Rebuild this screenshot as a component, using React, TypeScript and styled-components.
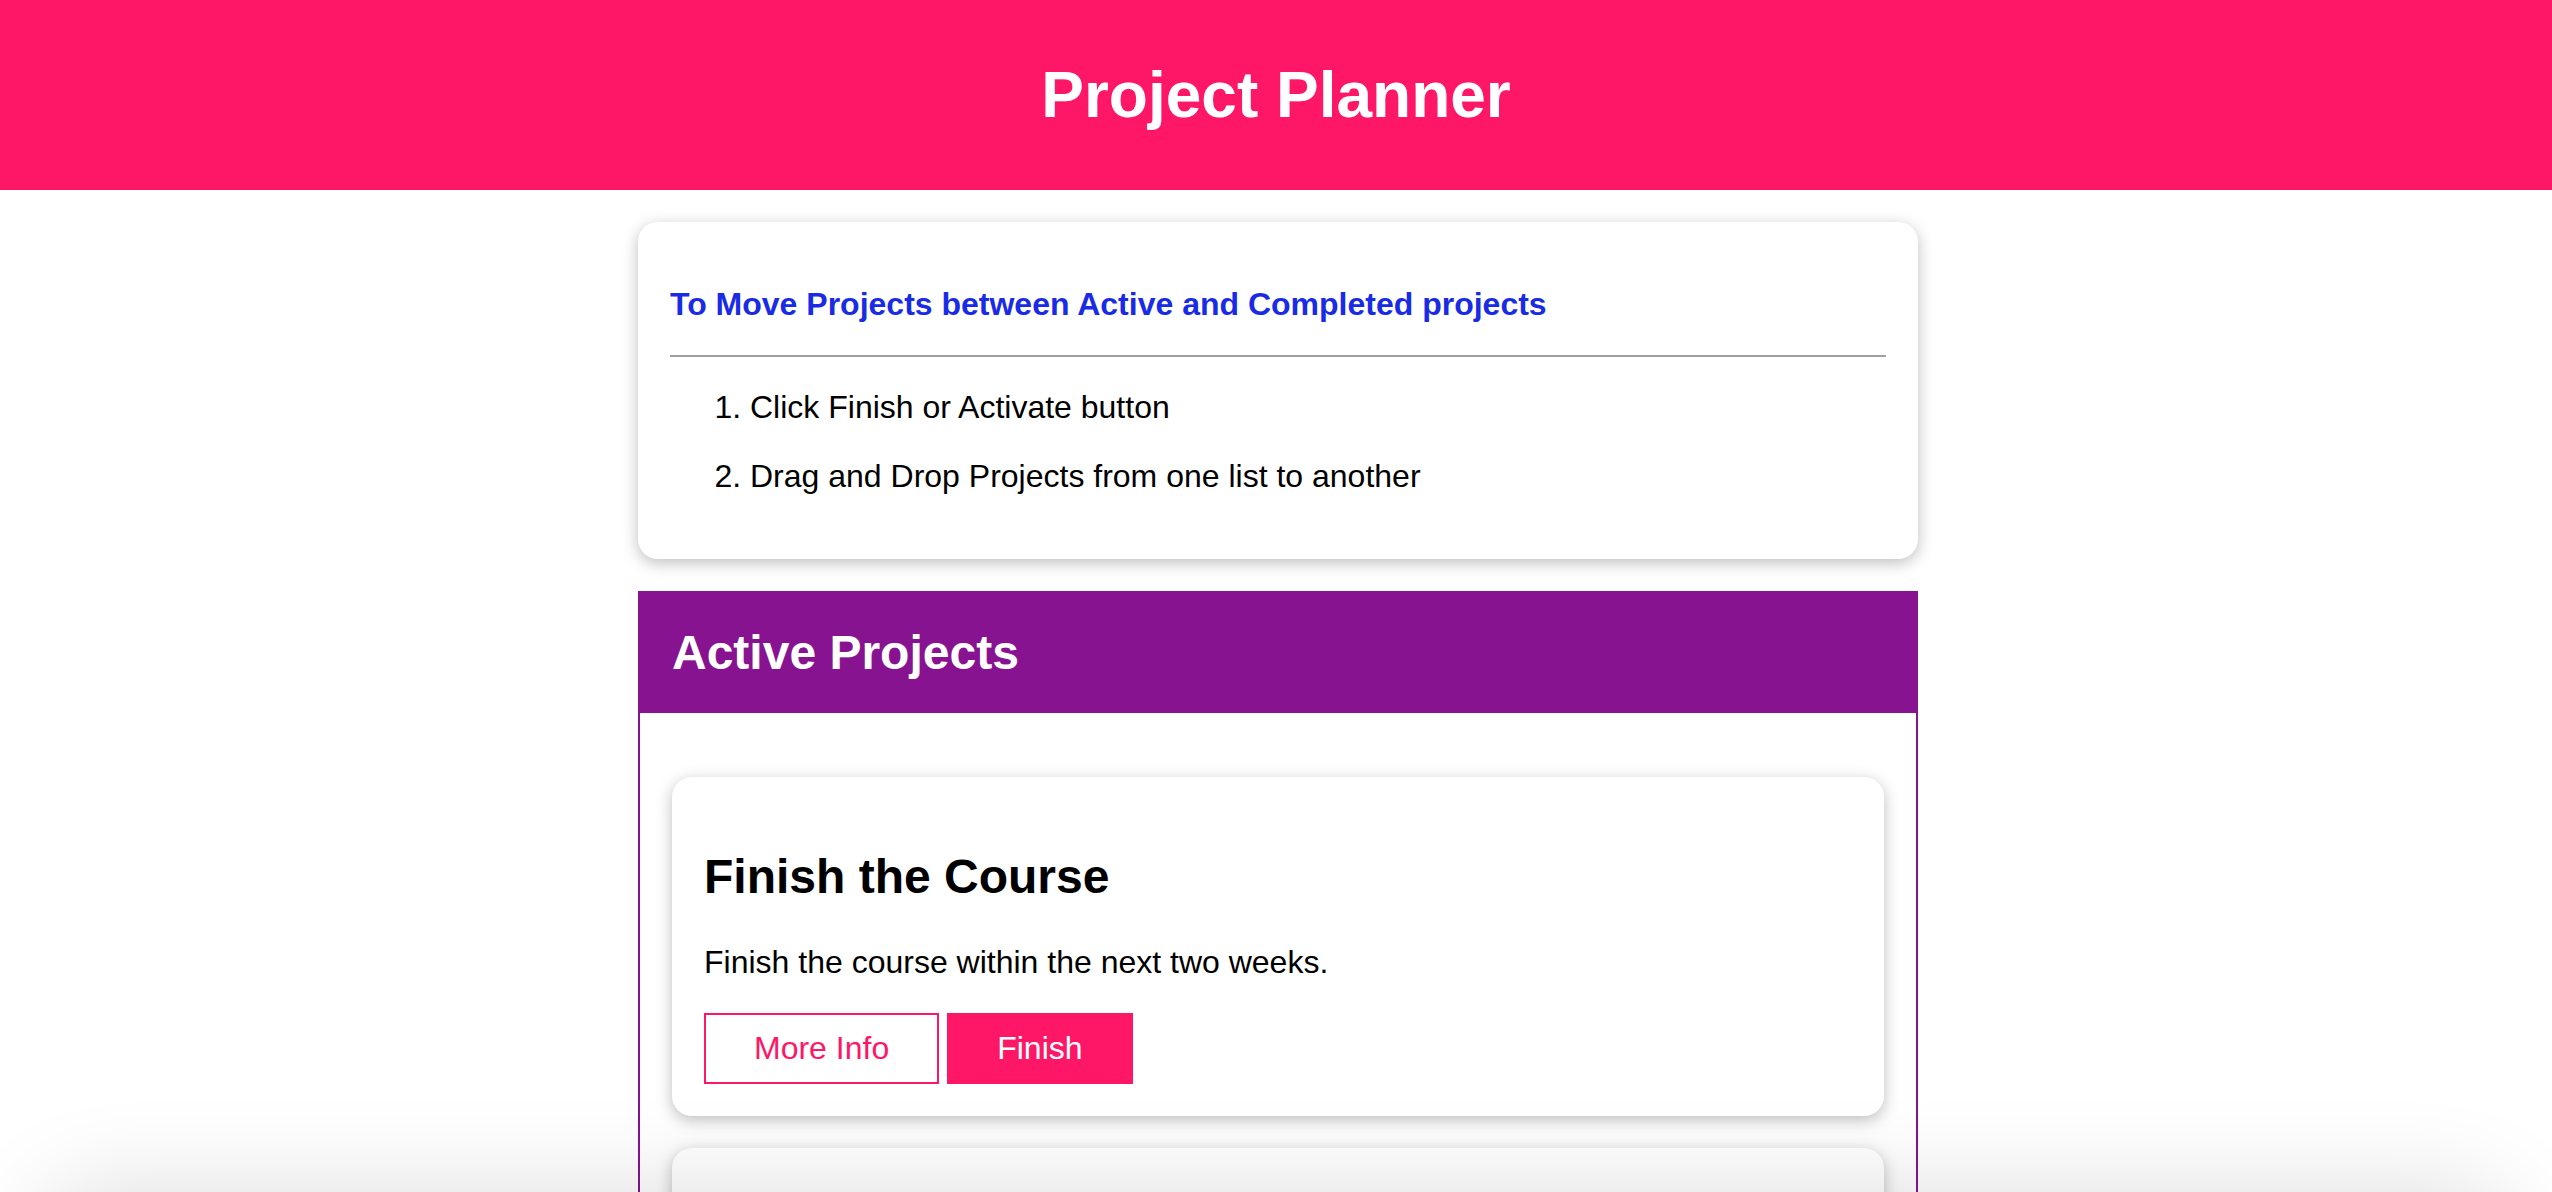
import styled, { createGlobalStyle } from "styled-components";

const colors = {
  pink: "#fd1766",
  purple: "#871391",
  blue: "#1a2be6",
  text: "#000000",
};

type Project = {
  id: string;
  title: string;
  description: string;
};

const activeProjects: Project[] = [
  {
    id: "p1",
    title: "Finish the Course",
    description: "Finish the course within the next two weeks.",
  },
  {
    id: "p2",
    title: "Build a Portfolio",
    description: "Put the finished projects online.",
  },
];

const steps = [
  "Click Finish or Activate button",
  "Drag and Drop Projects from one list to another",
];

export default function App() {
  return (
    <>
      <GlobalStyle />
      <TopBar>
        <Title>Project Planner</Title>
      </TopBar>
      <Main>
        <InfoCard>
          <InfoTitle>
            To Move Projects between Active and Completed projects
          </InfoTitle>
          <Divider />
          <Steps>
            {steps.map((step) => (
              <Step key={step}>{step}</Step>
            ))}
          </Steps>
        </InfoCard>

        <ProjectsSection aria-label="Active Projects">
          <SectionHeader>
            <SectionTitle>Active Projects</SectionTitle>
          </SectionHeader>
          <ProjectList>
            {activeProjects.map((project) => (
              <ProjectCard key={project.id}>
                <ProjectTitle>{project.title}</ProjectTitle>
                <ProjectText>{project.description}</ProjectText>
                <Actions>
                  <Button $variant="outline">More Info</Button>
                  <Button $variant="solid">Finish</Button>
                </Actions>
              </ProjectCard>
            ))}
          </ProjectList>
        </ProjectsSection>
      </Main>
      <WindowShade aria-hidden="true" />
    </>
  );
}

const GlobalStyle = createGlobalStyle`
  * {
    box-sizing: border-box;
  }

  body {
    margin: 0;
    background: #ffffff;
    color: ${colors.text};
    font-family: "Liberation Sans", Arial, Helvetica, sans-serif;
  }
`;

const TopBar = styled.header`
  display: flex;
  align-items: center;
  justify-content: center;
  height: 190px;
  background: ${colors.pink};
`;

const Title = styled.h1`
  margin: 0;
  color: #ffffff;
  font-size: 64px;
  font-weight: 700;
  line-height: 74px;
`;

const Main = styled.main`
  width: 1280px;
  margin: 32px 0 0 calc(50% - 638px);
`;

const InfoCard = styled.section`
  padding: 32px;
  background: #ffffff;
  border-radius: 20px;
  box-shadow: 0 4px 16px rgba(0, 0, 0, 0.26);
`;

const InfoTitle = styled.h3`
  margin: 32px 0;
  color: ${colors.blue};
  font-size: 32px;
  font-weight: 700;
  line-height: 37px;
`;

const Divider = styled.hr`
  margin: 0;
  height: 0;
  border: 0;
  border-top: 2px solid #a0a0a0;
`;

const Steps = styled.ol`
  margin: 32px 0;
  padding-left: 80px;
`;

const Step = styled.li`
  margin: 32px 0;
  font-size: 32px;
  line-height: 37px;
`;

const ProjectsSection = styled.section`
  margin-top: 32px;
  border: 2px solid ${colors.purple};
  border-top: 0;
`;

const SectionHeader = styled.header`
  display: flex;
  align-items: center;
  height: 122px;
  margin: 0 -2px;
  padding: 0 34px;
  background: ${colors.purple};
`;

const SectionTitle = styled.h2`
  margin: 0;
  color: #ffffff;
  font-size: 48px;
  font-weight: 700;
  line-height: 55px;
`;

const ProjectList = styled.ul`
  margin: 0;
  padding: 32px;
  list-style: none;
`;

const ProjectCard = styled.li`
  margin: 32px 0;
  padding: 32px;
  background: #ffffff;
  border-radius: 20px;
  box-shadow: 0 4px 16px rgba(0, 0, 0, 0.26);
`;

const ProjectTitle = styled.h2`
  margin: 40px 0;
  font-size: 48px;
  font-weight: 700;
  line-height: 55px;
`;

const ProjectText = styled.p`
  margin: 32px 0;
  font-size: 32px;
  line-height: 37px;
`;

const Actions = styled.div`
  display: flex;
  gap: 8px;
`;

const Button = styled.button<{ $variant: "outline" | "solid" }>`
  padding: 16px 48px;
  border: 2px solid ${colors.pink};
  background: ${(p) => (p.$variant === "solid" ? colors.pink : "#ffffff")};
  color: ${(p) => (p.$variant === "solid" ? "#ffffff" : colors.pink)};
  font-family: inherit;
  font-size: 32px;
  line-height: 35px;
  cursor: pointer;
`;

const WindowShade = styled.div`
  position: fixed;
  top: 100vh;
  left: 40px;
  right: 40px;
  height: 120px;
  border-radius: 60px;
  box-shadow: 0 0 100px rgba(0, 0, 0, 0.14);
  pointer-events: none;
`;
